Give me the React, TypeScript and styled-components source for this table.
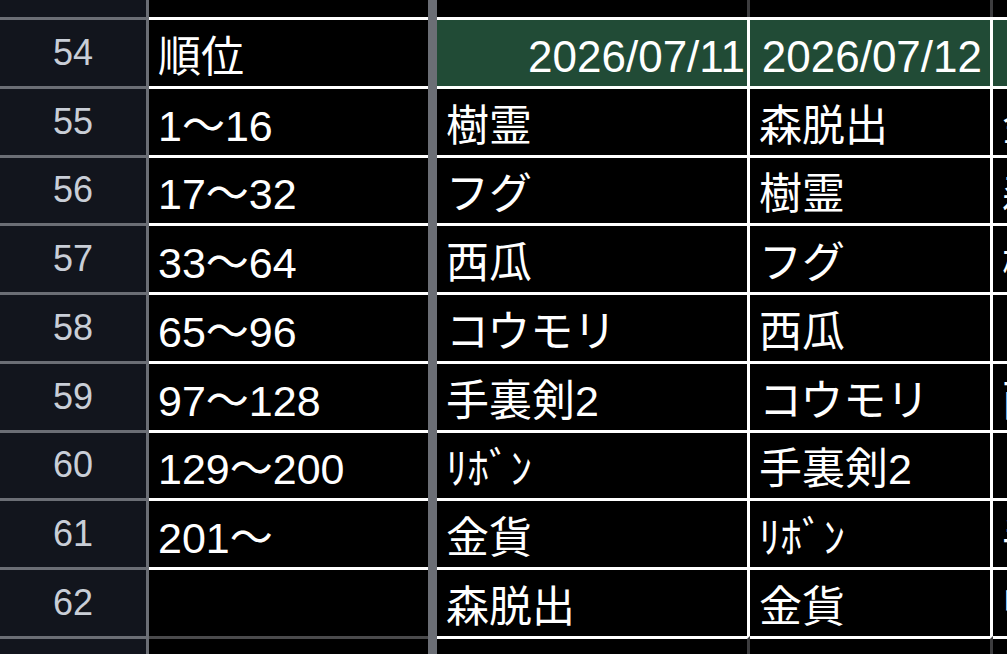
import React from "react";
import styled, { createGlobalStyle } from "styled-components";

const GlobalStyle = createGlobalStyle`
  html, body {
    margin: 0;
    padding: 0;
    background: #000;
    overflow: hidden;
  }
  body {
    font-family: "Liberation Sans", "Noto Sans CJK JP", sans-serif;
  }
`;

const WHITE = "#ffffff";
const HEAD_LINE = "#6b6e75";
const DIM_LINE = "#3d3d3f";
const A_BOTTOM = "#4a4a4c";
const GREEN = "#214b36";

const Sheet = styled.div`
  width: 1007px;
  height: 654px;
  overflow: hidden;
  background: #000;
`;

const Row = styled.div<{ $height: number }>`
  display: grid;
  grid-template-columns: 149px 279px 9px 313px 243px 243px;
  width: max-content;
  height: ${(p) => p.$height}px;
`;

const RowNum = styled.div<{ $top: boolean }>`
  box-sizing: border-box;
  display: flex;
  align-items: center;
  justify-content: center;
  background: #12151d;
  border-right: 3px solid ${HEAD_LINE};
  border-top: ${(p) => (p.$top ? `3px solid ${HEAD_LINE}` : "none")};
  color: #c9ced7;
  font-size: 36px;
  line-height: 1;
`;

const Divider = styled.div`
  background: ${HEAD_LINE};
`;

const Cell = styled.div<{
  $top?: string;
  $right?: string;
  $bg?: string;
}>`
  box-sizing: border-box;
  display: flex;
  align-items: flex-end;
  overflow: hidden;
  background: ${(p) => p.$bg ?? "#000"};
  border-top: ${(p) => (p.$top ? `3px solid ${p.$top}` : "none")};
  border-right: ${(p) => (p.$right ? `3px solid ${p.$right}` : "none")};
  padding: 0 4px 7px 9px;
  color: #fff;
  font-size: 43px;
  line-height: 1;
  white-space: nowrap;
`;

// dates are numbers in the sheet, so they sit at the right edge
const DateCell = styled(Cell)<{ $padRight: number }>`
  justify-content: flex-end;
  padding-right: ${(p) => p.$padRight}px;
  font-size: 44px;
`;

const ranks = ["1～16", "17～32", "33～64", "65～96", "97～128", "129～200", "201～", ""];
const items = ["樹霊", "フグ", "西瓜", "コウモリ", "手裏剣2", "ﾘﾎﾞﾝ", "金貨", "森脱出"];
const dates = ["2026/07/11", "2026/07/12", "2026/07/13"];

// each date column is the previous one rotated down by one
const rotate = (list: string[], n: number) =>
  list.map((_, i) => list[(i - n + list.length * 2) % list.length]);

const columns = dates.map((_, c) => rotate(items, c));

const ROW_H = 68.75;

export default function App() {
  return (
    <>
      <GlobalStyle />
      <Sheet>
        <Row $height={17}>
          <RowNum $top={false} />
          <Cell />
          <Divider />
          <Cell $right={DIM_LINE} />
          <Cell $right={DIM_LINE} />
          <Cell />
        </Row>

        <Row $height={ROW_H}>
          <RowNum $top>54</RowNum>
          <Cell $top={WHITE}>順位</Cell>
          <Divider />
          {dates.map((d, c) => (
            <DateCell
              key={d}
              $top={WHITE}
              $right={c < 2 ? WHITE : undefined}
              $bg={GREEN}
              $padRight={c === 0 ? 2 : 8}
            >
              {d}
            </DateCell>
          ))}
        </Row>

        {ranks.map((rank, i) => (
          <Row key={i} $height={ROW_H}>
            <RowNum $top>{55 + i}</RowNum>
            <Cell $top={WHITE}>{rank}</Cell>
            <Divider />
            {columns.map((col, c) => (
              <Cell key={c} $top={WHITE} $right={c < 2 ? WHITE : undefined}>
                {col[i]}
              </Cell>
            ))}
          </Row>
        ))}

        <Row $height={40}>
          <RowNum $top />
          <Cell $top={A_BOTTOM} />
          <Divider />
          <Cell $top={WHITE} $right={DIM_LINE} />
          <Cell $top={WHITE} $right={DIM_LINE} />
          <Cell $top={WHITE} />
        </Row>
      </Sheet>
    </>
  );
}
